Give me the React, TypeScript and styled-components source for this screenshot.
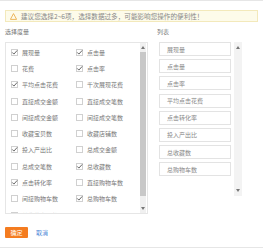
import React from "react";
import styled, { createGlobalStyle } from "styled-components";

const Global = createGlobalStyle`
  html, body { margin: 0; padding: 0; background: #fff; }
  body { font-family: "Noto Sans CJK SC", "Noto Sans", sans-serif; }
`;

const Frame = styled.div`
  width: 263px;
  height: 248px;
  box-sizing: border-box;
  border-top: 1px solid #e6e6e6;
  border-bottom: 1px solid #e6e6e6;
  padding: 9px 5px 0 5px;
  display: flex;
  flex-direction: column;
  color: #777;
  font-size: 6px;
`;

const Notice = styled.div`
  height: 12px;
  box-sizing: border-box;
  border: 1px solid #f3e9bb;
  background: #fdfbea;
  display: flex;
  align-items: center;
  gap: 4px;
  padding-left: 4px;
  font-size: 6.6px;
  color: #888;
  white-space: nowrap;
  line-height: 1;
`;

const Columns = styled.div`
  display: flex;
  gap: 9px;
  margin-top: 6px;
`;

const Column = styled.div<{ $w: number }>`
  width: ${(p) => p.$w}px;
  display: flex;
  flex-direction: column;
`;

const Label = styled.div`
  font-size: 6px;
  line-height: 8px;
  height: 8px;
  color: #777;
  margin-bottom: 6px;
`;

const Box = styled.div`
  height: 172px;
  box-sizing: border-box;
  border: 1px solid #e6e6e6;
  display: flex;
  overflow: hidden;
`;

const Grid = styled.div`
  flex: 1;
  display: grid;
  grid-template-columns: 65px 1fr;
  grid-auto-rows: 16.3px;
  padding: 1px 0 0 5px;
  overflow: hidden;
`;

const Option = styled.div`
  display: flex;
  align-items: center;
  gap: 4px;
  font-size: 6px;
  color: #777;
  white-space: nowrap;
`;

const Scroll = styled.div<{ $w: number }>`
  width: ${(p) => p.$w}px;
  display: flex;
  flex-direction: column;
  align-items: center;
  background: #f0f0f0;
  margin-right: 1px;
`;

const Arrow = styled.div`
  height: 9px;
  display: flex;
  align-items: center;
  justify-content: center;
`;

const Track = styled.div`
  flex: 1;
  width: 100%;
  display: flex;
  flex-direction: column;
`;

const Thumb = styled.div<{ $h: number }>`
  height: ${(p) => p.$h}px;
  background: #c8c8c8;
`;

const RightBody = styled.div`
  display: flex;
  gap: 3px;
  padding-left: 2px;
`;

const List = styled.div`
  width: 72px;
  display: flex;
  flex-direction: column;
  gap: 3.2px;
`;

const Item = styled.div`
  height: 14px;
  box-sizing: border-box;
  border: 1px solid #e3e3e3;
  padding-left: 7px;
  display: flex;
  align-items: center;
  font-size: 6px;
  color: #888;
  white-space: nowrap;
`;

const RightScroll = styled.div`
  width: 8px;
  height: 154px;
  background: #f3f3f3;
  display: flex;
  flex-direction: column;
  justify-content: space-between;
  padding: 1px 0;
  box-sizing: border-box;
`;

const Footer = styled.div`
  display: flex;
  align-items: center;
  gap: 8px;
  margin-top: 13px;
`;

const Primary = styled.button`
  width: 23px;
  height: 11px;
  border: none;
  border-radius: 1px;
  background: #f47c20;
  color: #fff;
  font-family: inherit;
  font-size: 6px;
  padding: 0;
  line-height: 1;
`;

const LinkBtn = styled.span`
  color: #4a86d6;
  font-size: 6px;
`;

const Check = ({ on }: { on: boolean }) => (
  <svg width="7" height="7" viewBox="0 0 7 7" style={{ flex: "none" }}>
    <rect x="0.5" y="0.5" width="6" height="6" fill="#fff" stroke="#d0d0d0" />
    {on && <path d="M1.2 3.4 L2.9 5.1 L6.2 1.4" fill="none" stroke="#555" strokeWidth="0.9" />}
  </svg>
);

const Up = () => (
  <svg width="4" height="3" viewBox="0 0 4 3">
    <path d="M0 3 L2 0 L4 3 Z" fill="#777" />
  </svg>
);
const Down = () => (
  <svg width="4" height="3" viewBox="0 0 4 3">
    <path d="M0 0 L2 3 L4 0 Z" fill="#777" />
  </svg>
);

const options: [string, boolean][] = [
  ["展现量", true], ["点击量", true],
  ["花费", false], ["点击率", true],
  ["平均点击花费", true], ["千次展现花费", false],
  ["直接成交金额", false], ["直接成交笔数", false],
  ["间接成交金额", false], ["间接成交笔数", false],
  ["收藏宝贝数", false], ["收藏店铺数", false],
  ["投入产出比", true], ["总成交金额", false],
  ["总成交笔数", false], ["总收藏数", true],
  ["点击转化率", true], ["直接购物车数", false],
  ["间接购物车数", false], ["总购物车数", true],
  ["总收藏宝贝数", false], ["", false],
];

const selected = ["展现量", "点击量", "点击率", "平均点击花费", "点击转化率", "投入产出比", "总收藏数", "总购物车数"];

export default function App() {
  return (
    <>
      <Global />
      <Frame>
        <Notice>
          <svg width="7" height="7" viewBox="0 0 7 7">
            <path d="M3.5 0.6 L6.6 6.4 L0.4 6.4 Z" fill="none" stroke="#e8a63a" strokeWidth="0.8" />
          </svg>
          建议您选择2~6项，选择数据过多，可能影响您操作的便利性！
        </Notice>
        <Columns>
          <Column $w={143}>
            <Label>选择度量</Label>
            <Box>
              <Grid>
                {options.map(([t, on], i) => (
                  <Option key={i}>{t && <Check on={on} />}{t}</Option>
                ))}
              </Grid>
              <Scroll $w={6}>
                <Arrow><Up /></Arrow>
                <Track>
                  <Thumb $h={144} />
                </Track>
                <Arrow><Down /></Arrow>
              </Scroll>
            </Box>
          </Column>
          <Column $w={96}>
            <Label>列表</Label>
            <RightBody>
              <List>
                {selected.map((s) => (
                  <Item key={s}>{s}</Item>
                ))}
              </List>
              <RightScroll>
                <Arrow><Up /></Arrow>
                <Arrow><Down /></Arrow>
              </RightScroll>
            </RightBody>
          </Column>
        </Columns>
        <Footer>
          <Primary>确定</Primary>
          <LinkBtn>取消</LinkBtn>
        </Footer>
      </Frame>
    </>
  );
}
